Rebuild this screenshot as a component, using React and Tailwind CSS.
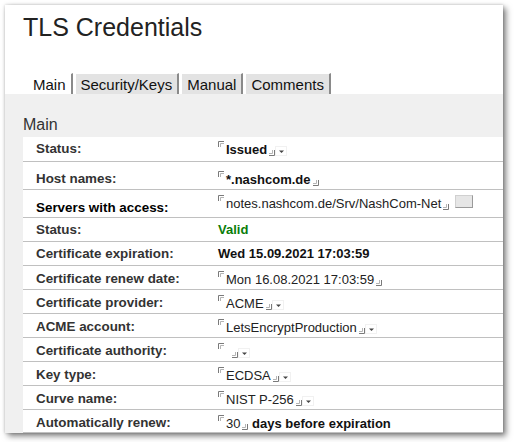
import React from 'react'

// Notes-style field delimiters and the little dropdown helper box
function Open() {
  return (
    <svg width="6" height="6" viewBox="0 0 6 6" className="inline-block align-[7px] mr-[2px]">
      <path d="M0.5 6V0.5H6" fill="none" stroke="#7a7a7a" strokeWidth="1" />
      <path d="M2.5 6V2.5H6" fill="none" stroke="#b5b5b5" strokeWidth="1" />
    </svg>
  )
}

function Close() {
  return (
    <svg width="6" height="6" viewBox="0 0 6 6" className="inline-block align-[-2px] ml-[2px]">
      <path d="M0 5.5H5.5V0" fill="none" stroke="#7a7a7a" strokeWidth="1" />
      <path d="M0 3.5H3.5V0" fill="none" stroke="#b5b5b5" strokeWidth="1" />
    </svg>
  )
}

function Drop() {
  return (
    <svg width="12" height="10" viewBox="0 0 12 10" className="inline-block align-[-2px]">
      <rect x="0.5" y="0.5" width="11" height="9" fill="none" stroke="#e2e2e2" strokeDasharray="1 1" />
      <path d="M4 4.5H9L6.5 7Z" fill="#444" />
    </svg>
  )
}

function Field({ children, bold, drop }) {
  return (
    <span className="whitespace-nowrap">
      <Open />
      <span className={bold ? 'font-bold text-[#111]' : 'text-[#222]'}>{children}</span>
      <Close />
      {drop && <Drop />}
    </span>
  )
}

const rows = [
  { label: 'Status:', h: 'h-[25px]', lt: 'pt-[4px]', vt: 'pt-[4px]', value: <Field bold drop>Issued</Field> },
  { label: 'Host names:', h: 'h-[28px]', lt: 'pt-[9px]', vt: 'pt-[9px]', value: <Field bold>*.nashcom.de</Field> },
  {
    label: 'Servers with access:',
    dark: true,
    h: 'h-[28px]',
    lt: 'pt-[10px]',
    vt: 'pt-[5px]',
    value: (
      <span className="flex items-start">
        <Field>notes.nashcom.de/Srv/NashCom-Net</Field>
        <span className="ml-[6px] w-[18px] h-[13px] bg-[#e6e6e6] border border-[#9a9a9a] border-t-[#d0d0d0] border-l-[#d0d0d0]" />
      </span>
    ),
  },
  { label: 'Status:', h: 'h-[24px]', lt: 'pt-[4px]', vt: 'pt-[4px]', value: <span className="font-bold text-[#0a7d0a]">Valid</span> },
  { label: 'Certificate expiration:', h: 'h-[24px]', lt: 'pt-[4px]', vt: 'pt-[4px]', value: <span className="font-bold text-[#111]">Wed 15.09.2021 17:03:59</span> },
  { label: 'Certificate renew date:', h: 'h-[24px]', lt: 'pt-[5px]', vt: 'pt-[5px]', value: <Field>Mon 16.08.2021 17:03:59</Field> },
  { label: 'Certificate provider:', h: 'h-[24px]', lt: 'pt-[5px]', vt: 'pt-[5px]', value: <Field drop>ACME</Field> },
  { label: 'ACME account:', h: 'h-[24px]', lt: 'pt-[5px]', vt: 'pt-[5px]', value: <Field drop>LetsEncryptProduction</Field> },
  { label: 'Certificate authority:', h: 'h-[24px]', lt: 'pt-[5px]', vt: 'pt-[5px]', value: <Field drop>{' '}</Field> },
  { label: 'Key type:', h: 'h-[24px]', lt: 'pt-[5px]', vt: 'pt-[5px]', value: <Field drop>ECDSA</Field> },
  { label: 'Curve name:', h: 'h-[24px]', lt: 'pt-[5px]', vt: 'pt-[5px]', value: <Field drop>NIST P-256</Field> },
  {
    label: 'Automatically renew:',
    h: 'h-[23px]',
    lt: 'pt-[5px]',
    vt: 'pt-[5px]',
    value: (
      <span className="whitespace-nowrap">
        <Field>30</Field>
        <span className="font-bold text-[#111]"> days before expiration</span>
      </span>
    ),
  },
]

const tabs = [
  { name: 'Main', active: true },
  { name: 'Security/Keys' },
  { name: 'Manual' },
  { name: 'Comments' },
]

export default function App() {
  return (
    <div className="w-[514px] h-[442px] bg-white pt-[5px] pl-[5px] font-['Liberation_Sans',Arial,sans-serif]">
      <div className="w-[498px] h-[428px] bg-white overflow-hidden flex flex-col shadow-[3px_3px_6px_rgba(0,0,0,0.5),0_0_3px_rgba(0,0,0,0.2)]">
        <h1 className="pl-[18px] pt-[10px] text-[25px] leading-[25px] text-[#222]">TLS Credentials</h1>

        {/* tab strip */}
        <div className="flex gap-[2px] pl-[22px] mt-[33px] h-[21px]">
          {tabs.map((t) => (
            <div
              key={t.name}
              className={`h-[21px] pl-[5px] pr-[5px] text-[15px] leading-[22px] text-[#111] border-l border-t border-r-2 border-l-white border-t-white border-r-[#8a8a8a] ${
                t.active ? 'bg-white' : 'bg-[#e3e3e3]'
              }`}
            >
              {t.name}
            </div>
          ))}
        </div>

        <div className="flex-1 bg-[#f0f0f0] pt-[22px] pl-[18px]">
          <h2 className="text-[16px] leading-[18px] text-[#333]">Main</h2>
          <div className="mt-[3px] bg-white text-[13px] leading-[15px]">
            {rows.map((r, i) => (
              <div key={i} className={`flex ${r.h} border-b border-[#c0c0c0]`}>
                <div className={`w-[195px] shrink-0 pl-[13px] font-bold text-[13.4px] ${r.lt} ${r.dark ? 'text-black' : 'text-[#333]'}`}>
                  {r.label}
                </div>
                <div className={`flex-1 ${r.vt}`}>{r.value}</div>
              </div>
            ))}
          </div>
        </div>
      </div>
    </div>
  )
}
